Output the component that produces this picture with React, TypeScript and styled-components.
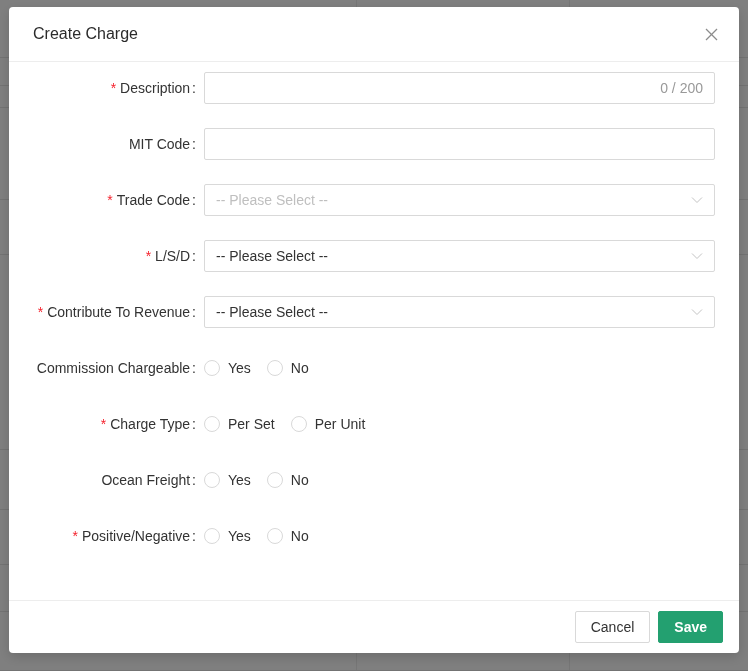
import React from 'react';
import styled, { createGlobalStyle } from 'styled-components';

const GlobalStyle = createGlobalStyle`
  html, body {
    margin: 0;
    padding: 0;
    height: 100%;
  }
  body {
    font-family: "Liberation Sans", Arial, Helvetica, sans-serif;
    font-size: 14px;
    color: #333;
    background: #fff;
    overflow: hidden;
  }
  button, input {
    font-family: "Liberation Sans", Arial, Helvetica, sans-serif;
  }
`;

// page behind the dialog (only seen through the mask)
const Page = styled.div`
  width: 748px;
  height: 671px;
  background: #fff;
`;

const BgRow = styled.div<{ $h: number }>`
  display: grid;
  grid-template-columns: 357px 213px 1fr;
  height: ${(p) => p.$h}px;
  border-bottom: 1px solid #e6e6e6;
  box-sizing: border-box;
`;

const BgCell = styled.div`
  border-right: 1px solid #ececec;
  &:last-child {
    border-right: none;
  }
`;

const Mask = styled.div`
  position: fixed;
  inset: 0;
  background: rgba(0, 0, 0, 0.5);
`;

const Dialog = styled.div`
  position: relative;
  width: 730px;
  margin: 7px auto 0;
  background: #fff;
  border-radius: 4px;
  box-shadow: 0 4px 12px rgba(0, 0, 0, 0.15);
  display: flex;
  flex-direction: column;
`;

const Header = styled.div`
  height: 54px;
  padding: 0 24px;
  display: flex;
  align-items: center;
  justify-content: space-between;
  border-bottom: 1px solid #ededed;
`;

const Title = styled.div`
  font-size: 16px;
  color: #2b2b2b;
  margin-top: -1px;
`;

const CloseBtn = styled.button`
  border: none;
  background: none;
  padding: 0;
  width: 16px;
  height: 16px;
  display: flex;
  align-items: center;
  justify-content: center;
  margin-right: -4px;
  cursor: pointer;
`;

const Body = styled.div`
  padding: 10px 24px 24px;
`;

const FormRow = styled.div`
  display: flex;
  align-items: center;
  height: 32px;
  margin-bottom: 24px;
`;

const Label = styled.label`
  width: 163px;
  flex-shrink: 0;
  text-align: right;
  white-space: nowrap;
  color: #333;
  margin-right: 8px;
`;

const Star = styled.span`
  color: #f5222d;
  margin-right: 4px;
`;

const Colon = styled.span`
  margin-left: 2px;
`;

const Field = styled.div`
  flex: 1;
  height: 32px;
  display: flex;
  align-items: center;
`;

const InputBox = styled.div`
  flex: 1;
  height: 32px;
  box-sizing: border-box;
  border: 1px solid #d9d9d9;
  border-radius: 2px;
  padding: 0 11px;
  display: flex;
  align-items: center;
  justify-content: space-between;
  background: #fff;
`;

const Counter = styled.span`
  margin-left: auto;
  color: #999;
`;

const SelectText = styled.span<{ $muted?: boolean }>`
  color: ${(p) => (p.$muted ? '#bfbfbf' : '#333')};
`;

const RadioGroup = styled.div`
  display: flex;
  align-items: center;
`;

const RadioItem = styled.label`
  display: inline-flex;
  align-items: center;
  margin-right: 8px;
  cursor: pointer;
`;

const RadioCircle = styled.span`
  width: 16px;
  height: 16px;
  box-sizing: border-box;
  border: 1px solid #d9d9d9;
  border-radius: 50%;
  background: #fff;
`;

const RadioText = styled.span`
  padding: 0 8px;
  color: #333;
`;

const Footer = styled.div`
  border-top: 1px solid #ededed;
  padding: 10px 16px;
  display: flex;
  justify-content: flex-end;
  gap: 8px;
`;

const Button = styled.button<{ $primary?: boolean }>`
  height: 32px;
  padding: 0 15px;
  min-width: 64px;
  border-radius: 2px;
  font-size: 14px;
  cursor: pointer;
  border: 1px solid ${(p) => (p.$primary ? '#23a070' : '#d9d9d9')};
  background: ${(p) => (p.$primary ? '#23a070' : '#fff')};
  color: ${(p) => (p.$primary ? '#fff' : '#333')};
  font-weight: ${(p) => (p.$primary ? 'bold' : 'normal')};
`;

const Chevron = () => (
  <svg width="12" height="8" viewBox="0 0 12 8">
    <polyline points="1,1.5 6,6.5 11,1.5" fill="none" stroke="#c4c4c4" strokeWidth="1" />
  </svg>
);

const CloseIcon = () => (
  <svg width="13" height="13" viewBox="0 0 13 13">
    <line x1="1" y1="1" x2="12" y2="12" stroke="#8c8c8c" strokeWidth="1.2" />
    <line x1="12" y1="1" x2="1" y2="12" stroke="#8c8c8c" strokeWidth="1.2" />
  </svg>
);

const bgRows = [58, 28, 22, 92, 55, 195, 60, 55, 47, 59];

const radioRows = [
  { label: 'Commission Chargeable', required: false, options: ['Yes', 'No'] },
  { label: 'Charge Type', required: true, options: ['Per Set', 'Per Unit'] },
  { label: 'Ocean Freight', required: false, options: ['Yes', 'No'] },
  { label: 'Positive/Negative', required: true, options: ['Yes', 'No'] },
];

const selectRows = [
  { label: 'Trade Code', muted: true },
  { label: 'L/S/D', muted: false },
  { label: 'Contribute To Revenue', muted: false },
];

const FieldLabel = ({ text, required }: { text: string; required?: boolean }) => (
  <Label>
    {required && <Star>*</Star>}
    {text}
    <Colon>:</Colon>
  </Label>
);

export default function App() {
  return (
    <>
      <GlobalStyle />
      <Page>
        {bgRows.map((h, i) => (
          <BgRow key={i} $h={h}>
            <BgCell />
            <BgCell />
            <BgCell />
          </BgRow>
        ))}
      </Page>
      <Mask>
        <Dialog>
          <Header>
            <Title>Create Charge</Title>
            <CloseBtn aria-label="close">
              <CloseIcon />
            </CloseBtn>
          </Header>
          <Body>
            <FormRow>
              <FieldLabel text="Description" required />
              <Field>
                <InputBox>
                  <Counter>0 / 200</Counter>
                </InputBox>
              </Field>
            </FormRow>
            <FormRow>
              <FieldLabel text="MIT Code" />
              <Field>
                <InputBox />
              </Field>
            </FormRow>
            {selectRows.map((r) => (
              <FormRow key={r.label}>
                <FieldLabel text={r.label} required />
                <Field>
                  <InputBox>
                    <SelectText $muted={r.muted}>-- Please Select --</SelectText>
                    <Chevron />
                  </InputBox>
                </Field>
              </FormRow>
            ))}
            {radioRows.map((r) => (
              <FormRow key={r.label}>
                <FieldLabel text={r.label} required={r.required} />
                <Field>
                  <RadioGroup>
                    {r.options.map((o) => (
                      <RadioItem key={o}>
                        <RadioCircle />
                        <RadioText>{o}</RadioText>
                      </RadioItem>
                    ))}
                  </RadioGroup>
                </Field>
              </FormRow>
            ))}
          </Body>
          <Footer>
            <Button>Cancel</Button>
            <Button $primary>Save</Button>
          </Footer>
        </Dialog>
      </Mask>
    </>
  );
}
